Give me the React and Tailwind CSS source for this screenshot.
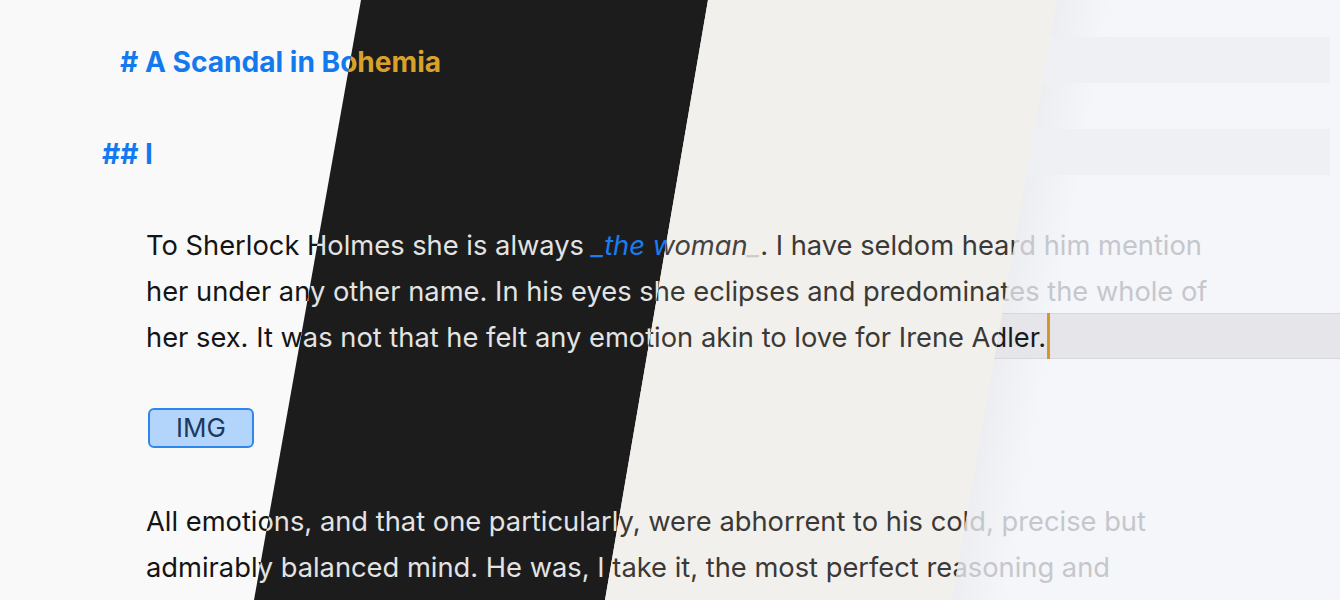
import { Fragment } from 'react'

const themes = {
  light: {
    pane: 'bg-[#f9f9fa]',
    text: 'text-[#141414]',
    head: 'text-[#1479ef]',
    em: 'text-[#1479ef]',
    emMark: 'text-[#1479ef]',
    band: '',
    current: '',
    currentText: '',
  },
  dark: {
    pane: 'bg-[#1c1c1c]',
    text: 'text-[#e3e3e3]',
    head: 'text-[#d9a12b]',
    em: 'text-[#1a7cf0]',
    emMark: 'text-[#1a7cf0]',
    band: '',
    current: '',
    currentText: '',
  },
  sepia: {
    pane: 'bg-[#f2f0ec]',
    text: 'text-[#3b3935]',
    head: 'text-[#3b3935]',
    em: 'text-[#45433f]',
    emMark: 'text-[#cfccc6]',
    band: '',
    current: '',
    currentText: '',
  },
  focus: {
    pane: 'bg-[linear-gradient(100deg,#eceef2_1042px,#f4f6fa_1095px)]',
    text: 'text-[#c6c7cc]',
    head: 'text-[#c6c7cc]',
    em: 'text-[#c6c7cc]',
    emMark: 'text-[#c6c7cc]',
    band: 'bg-[#eff0f4] mr-[10px]',
    current: 'bg-[#e6e6ea] border-y border-[#d8d8dc]',
    currentText: 'text-[#1a1a1c]',
  },
}

// each pane is the same document in another theme, cut out by a slanted polygon
const clips = {
  light: '',
  dark: '[clip-path:polygon(361px_0,708px_0,605px_600px,254px_600px)]',
  sepia: '[clip-path:polygon(708px_0,1340px_0,1340px_600px,605px_600px)]',
  focus: '[clip-path:polygon(1057px_0,1340px_0,1340px_600px,952px_600px)]',
}

function Line({ children, className = '' }) {
  return <div className={`h-[46px] pt-[4px] leading-[42px] whitespace-pre ${className}`}>{children}</div>
}

function Doc({ t }) {
  return (
    <div className="pt-[37px] text-[27.3px]">
      {/* headings */}
      <Line className={`${t.band} ${t.head} font-bold text-[28.1px] pl-[120px]`}># A Scandal in Bohemia</Line>
      <Line />
      <Line className={`${t.band} ${t.head} font-bold text-[28.1px] pl-[102px]`}>## I</Line>
      <Line />

      {/* first paragraph */}
      <Line className={`${t.text} pl-[146px]`}>
        To Sherlock Holmes she is always{' '}
        <span className="italic">
          <span className={t.emMark}>_</span>
          <span className={t.em}>the woman</span>
          <span className={t.emMark}>_</span>
        </span>
        . I have seldom heard him mention
      </Line>
      <Line className={`${t.text} pl-[146px]`}>
        her under any other name. In his eyes she eclipses and predominates the whole of
      </Line>
      <div className={`h-[46px] ${t.current} ${t.currentText || t.text} pl-[146px] flex items-center whitespace-pre`}>
        <span className="pt-[4px] leading-[40px]">her sex. It was not that he felt any emotion akin to love for Irene Adler.</span>
        <span className="inline-block w-[3px] h-[46px] bg-[#d4952c] ml-[1px]" />
      </div>
      <Line />

      {/* image tag */}
      <div className="h-[46px] pl-[148px] flex items-center">
        <span className="h-[40px] w-[106px] flex items-center justify-center rounded-[6px] border-2 border-[#2f86ec] bg-[#b4d5fb] text-[#1b3961] text-[26px] leading-none">
          IMG
        </span>
      </div>
      <Line />

      {/* second paragraph */}
      <Line className={`${t.text} pl-[146px]`}>
        All emotions, and that one particularly, were abhorrent to his cold, precise but
      </Line>
      <Line className={`${t.text} pl-[146px]`}>
        admirably balanced mind. He was, I take it, the most perfect reasoning and
      </Line>
    </div>
  )
}

export default function App() {
  return (
    <div className="relative w-[1340px] h-[600px] overflow-hidden font-['Inter','Noto_Sans',sans-serif]">
      {['light', 'dark', 'sepia', 'focus'].map((k) => (
        <Fragment key={k}>
          <div className={`absolute inset-0 ${themes[k].pane} ${clips[k]}`}>
            <Doc t={themes[k]} />
          </div>
        </Fragment>
      ))}
    </div>
  )
}
